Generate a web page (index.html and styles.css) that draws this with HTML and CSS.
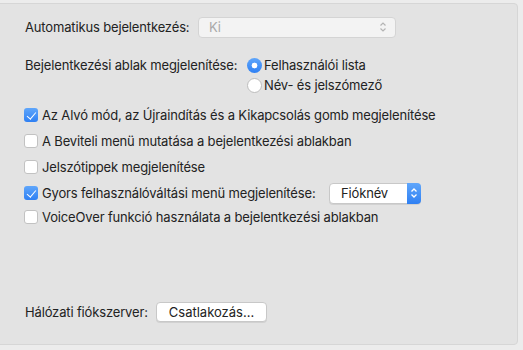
FILE: index.html
```html
<!doctype html>
<html lang="hu">
  <head>
    <meta charset="UTF-8" />
    <title>Bejelentkezési beállítások</title>
    <link rel="stylesheet" href="styles.css">
  </head>
  <body>
    <div class="panel">
      <!-- Auto login -->
      <div class="row row-auto">
        <span class="label label-auto">Automatikus bejelentkezés:</span>
        <div class="popup popup-disabled">
          <span>Ki</span>
          <svg class="chev" width="8" height="12" viewBox="0 0 8 12">
            <path d="M1.5 4.5 L4 2 L6.5 4.5 M1.5 7.5 L4 10 L6.5 7.5" fill="none" stroke="#b4b4b4" stroke-width="1.2"/>
          </svg>
        </div>
      </div>

      <!-- Window display -->
      <div class="row row-radios">
        <span class="label label-window">Bejelentkezési ablak megjelenítése:</span>
        <div class="radios">
          <label class="radio-line"><span class="radio on"></span>Felhasználói lista</label>
          <label class="radio-line"><span class="radio"></span>Név- és jelszómező</label>
        </div>
      </div>

      <!-- Checkboxes -->
      <div class="checks">
        <label class="check-line"><span class="box on"></span>Az Alvó mód, az Újraindítás és a Kikapcsolás gomb megjelenítése</label>
        <label class="check-line"><span class="box"></span>A Beviteli menü mutatása a bejelentkezési ablakban</label>
        <label class="check-line"><span class="box"></span>Jelszótippek megjelenítése</label>
        <label class="check-line"><span class="box on"></span><span class="label label-fast">Gyors felhasználóváltási menü megjelenítése:</span>
          <div class="popup popup-active">
            <span>Fióknév</span>
            <span class="stepper">
              <svg width="8" height="12" viewBox="0 0 8 12">
                <path d="M1.5 4.5 L4 2 L6.5 4.5 M1.5 7.5 L4 10 L6.5 7.5" fill="none" stroke="#fff" stroke-width="1.3"/>
              </svg>
            </span>
          </div>
        </label>
        <label class="check-line"><span class="box"></span>VoiceOver funkció használata a bejelentkezési ablakban</label>
      </div>

      <!-- Network -->
      <div class="row row-net">
        <span class="label label-net">Hálózati fiókszerver:</span>
        <button class="btn">Csatlakozás...</button>
      </div>
    </div>
  </body>
</html>
```

FILE: styles.css
```css
body {
  margin: 0;
  background: #ececec;
  font-family: "Inter", "Liberation Sans", sans-serif;
  font-size: 13px;
  letter-spacing: -0.15px;
  color: #222;
}

.panel {
  box-sizing: border-box;
  height: 342px;
  margin: 3px 5px 0 -1px;
  padding: 12px 0 0 25px;
  background: #e3e3e3;
  border: 1px solid #d6d6d6;
  border-radius: 0 4px 4px 0;
}

.row {
  display: flex;
  align-items: center;
}

.label {
  flex: none;
  white-space: nowrap;
}

.label-auto { width: 173px; }
.label-window { width: 222px; align-self: flex-start; line-height: 20px; }
.label-fast { width: 287px; }
.label-net { width: 131px; }

.row-auto {
  height: 22px;
}

/* popups */
.popup {
  box-sizing: border-box;
  display: flex;
  align-items: center;
  justify-content: space-between;
  height: 21px;
  border-radius: 4px;
  background: #f3f3f3;
  border: 1px solid #d4d4d4;
}

.popup-disabled {
  width: 198px;
  padding: 0 8px 0 10px;
  color: #a9a9a9;
}

.popup-active {
  width: 92px;
  padding-left: 11px;
  background: #fff;
  border-color: #c8c8c8;
  box-shadow: 0 1px 0 rgba(0, 0, 0, 0.08);
  color: #222;
}

.stepper {
  display: flex;
  align-items: center;
  justify-content: center;
  align-self: stretch;
  width: 14px;
  margin: -1px -1px -1px 0;
  border-radius: 0 4px 4px 0;
  background: linear-gradient(#5fa6fb, #2f80f3);
}

/* radios */
.row-radios {
  margin-top: 17px;
  align-items: flex-start;
}

.radios {
  display: flex;
  flex-direction: column;
}

.radio-line {
  display: flex;
  align-items: center;
  height: 20px;
}

.radio {
  box-sizing: border-box;
  width: 15px;
  height: 15px;
  margin-right: 2px;
  border-radius: 50%;
  background: #fff;
  border: 1px solid #bdbdbd;
}

.radio.on {
  border: none;
  background: radial-gradient(circle, #fff 0 2.6px, transparent 3.2px), linear-gradient(#5fa6fb, #2f80f3);
}

/* checkboxes */
.checks {
  margin: 7px 0 0 -1px;
}

.check-line {
  display: flex;
  align-items: center;
  height: 26px;
  white-space: nowrap;
}

.check-line:last-child {
  height: 22px;
}

.box {
  box-sizing: border-box;
  flex: none;
  width: 14px;
  height: 14px;
  margin-right: 4px;
  border-radius: 3px;
  background: #fff;
  border: 1px solid #c2c2c2;
}

.box.on {
  border: none;
  background: linear-gradient(#5fa6fb, #2f80f3);
  position: relative;
}

.box.on::after {
  content: "";
  position: absolute;
  left: 4.5px;
  top: 1.5px;
  width: 3.5px;
  height: 8px;
  border: solid #fff;
  border-width: 0 1.8px 1.8px 0;
  transform: rotate(40deg);
}

/* network */
.row-net {
  margin-top: 74px;
}

.btn {
  box-sizing: border-box;
  width: 111px;
  height: 20px;
  padding: 0;
  font: inherit;
  color: #222;
  background: #fff;
  border: 1px solid #c8c8c8;
  border-radius: 4px;
  box-shadow: 0 1px 0 rgba(0, 0, 0, 0.08);
}
```
